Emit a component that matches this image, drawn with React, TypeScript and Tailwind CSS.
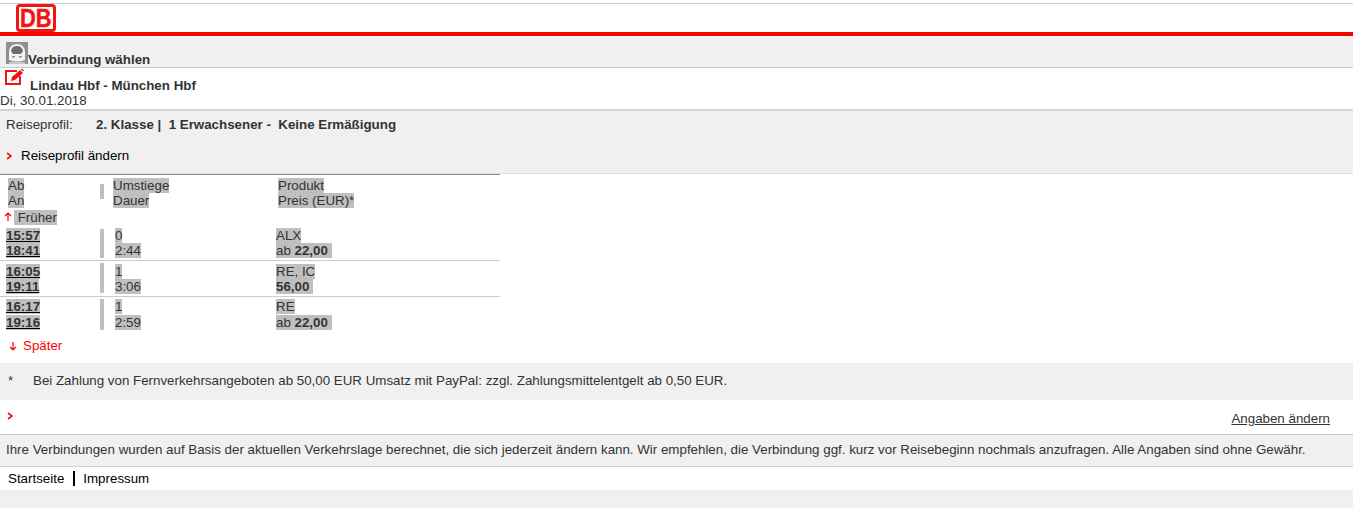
const rows = [
  { ab: "15:57", an: "18:41", um: "0", dauer: "2:44", produkt: "ALX", prefix: "ab ", preis: "22,00", box: "h-[33px] border-b", text: "", bar: "mt-[1px] h-[29px]", second: "" },
  { ab: "16:05", an: "19:11", um: "1", dauer: "3:06", produkt: "RE, IC", prefix: "", preis: "56,00", box: "h-[36px] border-b", text: "pt-[3px]", bar: "mt-[2px] h-[30px]", second: "" },
  { ab: "16:17", an: "19:16", um: "1", dauer: "2:59", produkt: "RE", prefix: "ab ", preis: "22,00", box: "h-[34px]", text: "pt-[2px]", bar: "mt-[2px] h-[31px]", second: "mt-[1px]" },
]

function Mark({ children }: { children: React.ReactNode }) {
  return <span className="bg-[#bfbfbf]">{children}</span>
}

function Chevron() {
  return (
    <svg width="6" height="8" viewBox="0 0 6 8" className="shrink-0">
      <path d="M1 1 L5 4 L1 7" fill="none" stroke="#f01414" strokeWidth="1.6" />
    </svg>
  )
}

function Arrow({ down }: { down?: boolean }) {
  return (
    <svg width="8" height="10" viewBox="0 0 8 10" className="shrink-0">
      <path d={down ? "M4 1 V9 M1 6 L4 9 L7 6" : "M4 9 V1 M1 4 L4 1 L7 4"} fill="none" stroke="#ff0000" strokeWidth="1.2" />
    </svg>
  )
}

function DbLogo() {
  return (
    <div className="ml-4 flex h-[28px] w-[40px] items-center justify-center rounded-[4px] border-[3px] border-[#f01414] bg-white">
      <span className="scale-x-[0.84] text-[26px] leading-none font-bold text-[#f01414] [-webkit-text-stroke:0.5px_#f01414]">DB</span>
    </div>
  )
}

function TrainIcon() {
  return (
    <svg width="22" height="22" viewBox="0 0 22 22" className="mb-[3px] shrink-0">
      <rect width="22" height="22" fill="#8e9192" />
      <path d="M3 19 L3 9 Q4 2 11 2 Q18 2 19 9 L19 18 Q11 21 3 18 Z" fill="#f2f2f2" />
      <path d="M5 9 Q6 4 11 4 Q16 4 17 9 L15 12 L7 12 Z" fill="#6e6e6e" />
      <path d="M6 14 H9 V15.5 H6 Z M13 14 H16 V15.5 H13 Z" fill="#8e9192" />
      <path d="M3 20 H19 V22 H3 Z" fill="#c8c8c8" />
    </svg>
  )
}

function EditIcon() {
  return (
    <svg width="19" height="19" viewBox="0 0 19 19" className="mb-[6px] shrink-0">
      <path d="M12 3 H1 V16 H15 V8" fill="none" stroke="#f01414" strokeWidth="2" />
      <path d="M6 13 L7 9 L15 2 L18 5 L10 12 Z" fill="#f01414" />
      <path d="M16.5 1 L18.5 3" stroke="#f01414" strokeWidth="1.5" />
    </svg>
  )
}

export default function App() {
  return (
    <div className="min-h-[508px] bg-white font-['Liberation_Sans',Arial,sans-serif] text-[13.33px] leading-[15px] text-[#333]">
      <div className="h-[3px]" />
      <header className="flex h-[33px] items-start border-t border-[#cccccc] border-b-[4px] border-b-[#ff0000]">
        <DbLogo />
      </header>

      <div className="flex h-[31px] items-end bg-[#f0f0f0] pl-[6px]">
        <TrainIcon />
        <h1 className="text-[13.33px] leading-[15px] font-bold">Verbindung wählen</h1>
      </div>

      <div className="h-[44px] border-t border-[#cccccc] border-b-2 border-b-[#d4d4d4]">
        <div className="flex h-[25px] items-end pl-[5px]">
          <EditIcon />
          <span className="ml-[6px] font-bold">Lindau Hbf - München Hbf</span>
        </div>
        <div>Di, 30.01.2018</div>
      </div>

      <div className="h-[63px] border-b border-[#dddddd] bg-[#f0f0f0] pt-[6px] pl-[6px]">
        <div className="flex">
          <span className="w-[90px]">Reiseprofil:</span>
          <span className="font-bold whitespace-pre">2. Klasse |  1 Erwachsener -  Keine Ermäßigung</span>
        </div>
        <div className="mt-[16px] flex items-center text-black">
          <Chevron />
          <span className="ml-[9px]">Reiseprofil ändern</span>
        </div>
      </div>

      <div className="w-[500px] border-t border-[#8c8c8c] pt-[3px]">
        <div className="flex">
          <div className="w-[100px] pl-[8px]">
            <div><Mark>Ab</Mark></div>
            <div><Mark>An</Mark></div>
          </div>
          <div className="mt-[6px] h-[15px] w-[4px] bg-[#bfbfbf]" />
          <div className="w-[174px] pl-[9px]">
            <div><Mark>Umstiege</Mark></div>
            <div><Mark>Dauer</Mark></div>
          </div>
          <div>
            <div><Mark>Produkt</Mark></div>
            <div><Mark>Preis (EUR)*</Mark></div>
          </div>
        </div>
        <div className="mt-[1px] flex h-[16px] items-center pl-[4px]">
          <Arrow />
          <span className="ml-[2px]"><Mark>&nbsp;Früher</Mark></span>
        </div>

        <div className="mt-[3px]">
          {rows.map((r) => (
            <div key={r.ab} className={"flex border-[#cccccc] " + r.box}>
              <div className={"w-[100px] pl-[6px] font-bold underline decoration-black " + r.text}>
                <div><Mark>{r.ab}</Mark></div>
                <div className={r.second}><Mark>{r.an}</Mark></div>
              </div>
              <div className={"w-[4px] bg-[#bfbfbf] " + r.bar} />
              <div className={"w-[172px] pl-[11px] " + r.text}>
                <div><Mark>{r.um}</Mark></div>
                <div className={r.second}><Mark>{r.dauer}</Mark></div>
              </div>
              <div className={r.text}>
                <div><Mark>{r.produkt}</Mark></div>
                <div className={r.second}><Mark>{r.prefix}<b>{r.preis}</b>&nbsp;</Mark></div>
              </div>
            </div>
          ))}
        </div>
      </div>

      <div className="mt-[7px] flex h-[15px] items-center pl-[9px] text-[#ff0000]">
        <Arrow down />
        <span className="ml-[6px]">Später</span>
      </div>

      <div className="mt-[10px] flex h-[37px] items-center bg-[#f0f0f0] pb-[2px] pl-[8px]">
        <span className="w-[25px]">*</span>
        <span>Bei Zahlung von Fernverkehrsangeboten ab 50,00 EUR Umsatz mit PayPal: zzgl. Zahlungsmittelentgelt ab 0,50 EUR.</span>
      </div>

      <div className="flex h-[34px] items-start justify-between pt-[12px] pr-[23px] pl-[7px]">
        <Chevron />
        <a className="-mt-[1px] underline">Angaben ändern</a>
      </div>

      <div className="flex h-[33px] items-center border-y border-[#cccccc] bg-[#f0f0f0] pb-[3px] pl-[6px]">
        Ihre Verbindungen wurden auf Basis der aktuellen Verkehrslage berechnet, die sich jederzeit ändern kann. Wir empfehlen, die Verbindung ggf. kurz vor Reisebeginn nochmals anzufragen. Alle Angaben sind ohne Gewähr.
      </div>

      <div className="flex h-[23px] items-center pl-[8px] text-black">
        <span>Startseite</span>
        <span className="mr-[8px] ml-[9px] h-[15px] w-[2px] bg-black" />
        <span>Impressum</span>
      </div>
      <div className="h-[18px] bg-[#f0f0f0]" />
    </div>
  )
}
